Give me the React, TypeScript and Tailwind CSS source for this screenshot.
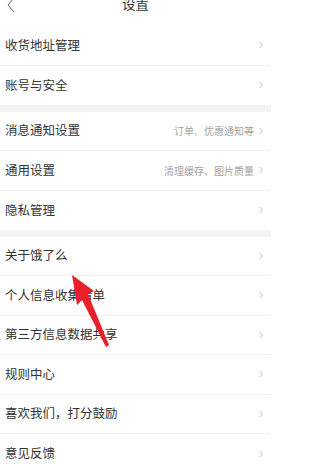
import React from "react";

type Item = { label: string; hint?: string };

const groups: Item[][] = [
  [{ label: "收货地址管理" }, { label: "账号与安全" }],
  [
    { label: "消息通知设置", hint: "订单、优惠通知等" },
    { label: "通用设置", hint: "清理缓存、图片质量" },
    { label: "隐私管理" },
  ],
  [
    { label: "关于饿了么" },
    { label: "个人信息收集清单" },
    { label: "第三方信息数据共享" },
    { label: "规则中心" },
    { label: "喜欢我们，打分鼓励" },
    { label: "意见反馈" },
  ],
];

function Chevron() {
  return (
    <svg width="6" height="8" viewBox="0 0 6 8" className="shrink-0">
      <polyline points="1.5,1 4.5,4 1.5,7" fill="none" stroke="#b8b8b8" strokeWidth="0.9" />
    </svg>
  );
}

function Row({ item, last }: { item: Item; last: boolean }) {
  return (
    <div
      className={
        "flex h-[39.5px] items-center justify-between pl-[5px] pr-[7px] " +
        (last ? "" : "border-b border-[#efefef]")
      }
    >
      <span className="text-[12.5px] text-[#333]">{item.label}</span>
      <div className="flex items-center gap-[4px]">
        {item.hint && <span className="text-[10px] text-[#a3a3a3]">{item.hint}</span>}
        <Chevron />
      </div>
    </div>
  );
}

export default function App() {
  return (
    <div
      className="relative h-[464px] w-[271px] overflow-hidden bg-[#f4f4f4]"
      style={{ fontFamily: '"Noto Sans CJK SC", "Noto Sans", sans-serif' }}
    >
      {/* header, mostly scrolled off the top */}
      <div className="relative h-[26px] overflow-hidden bg-white">
        <div className="-mt-[8px] flex h-[22px] items-center justify-center">
          <svg width="10" height="16" viewBox="0 0 10 16" className="absolute left-[6px] top-[-3px]">
            <polyline points="8,1 2,8 8,15" fill="none" stroke="#666" strokeWidth="1" />
          </svg>
          <span className="text-[13.5px] text-[#333]">设置</span>
        </div>
      </div>

      <div className="flex flex-col gap-[6.5px]">
        {groups.map((g, gi) => (
          <div key={gi} className="bg-white">
            {g.map((item, i) => (
              <Row key={item.label} item={item} last={i === g.length - 1} />
            ))}
          </div>
        ))}
      </div>

      {/* red annotation arrow */}
      <svg
        width="271"
        height="464"
        viewBox="0 0 271 464"
        className="pointer-events-none absolute left-0 top-0"
      >
        <polygon
          points="72,275 94,291 88,294 109,345 106,347 82,300 77,305"
          fill="#e8202a"
        />
      </svg>
    </div>
  );
}
